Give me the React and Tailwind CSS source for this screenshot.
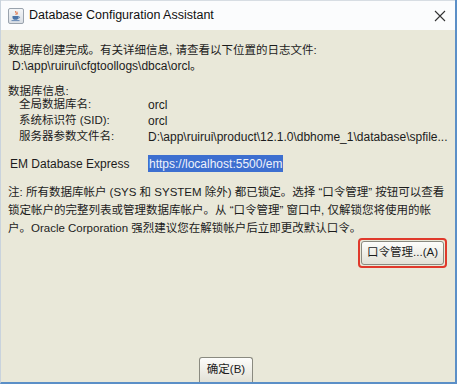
import React from "react";

const font = { fontFamily: '"Liberation Sans", "Noto Sans CJK SC", sans-serif' };

const JavaIcon = () => (
  <div className="w-[16px] h-[16px] rounded-[2px] border border-[#9aa3ad] bg-gradient-to-b from-[#f4f6f8] to-[#d9dee4] flex items-center justify-center">
    <svg width="12" height="12" viewBox="0 0 12 12">
      <path d="M6 1 C4.5 2.5 7.5 3 5.8 4.8" stroke="#e0602a" strokeWidth="1" fill="none" />
      <path d="M7.5 1.8 C6.6 2.8 8.2 3.3 7 4.6" stroke="#e0602a" strokeWidth="0.8" fill="none" />
      <path d="M2.5 6 H8.5 V7.5 C8.5 9 7.3 9.8 5.5 9.8 C3.7 9.8 2.5 9 2.5 7.5 Z" fill="#4a74a8" />
      <path d="M8.5 6.5 C10 6.5 10 8.3 8.3 8.3" stroke="#4a74a8" strokeWidth="0.8" fill="none" />
      <path d="M1.5 10.6 H9.5" stroke="#4a74a8" strokeWidth="0.8" />
    </svg>
  </div>
);

const InfoRow = ({ label, value }) => (
  <div className="flex h-4 items-center">
    <span className="w-[140px] pl-[11px] shrink-0">{label}</span>
    <span className="whitespace-nowrap text-[12px]">{value}</span>
  </div>
);

export default function App() {
  return (
    <div
      className="w-[457px] h-[384px] flex flex-col border-r-2 border-b-2 border-[#5b8fc7] border-l border-l-[#c9d3dd] overflow-hidden text-[11.5px] text-[#1c1c1c]"
      style={font}
    >
      {/* Title bar */}
      <div className="h-[30px] shrink-0 bg-[#fbfcfd] border-t border-[#d7dde3] flex items-center pl-[7px] pr-[9px]">
        <JavaIcon />
        <span className="ml-[5px] text-[12.5px] text-[#111]">Database Configuration Assistant</span>
        <svg className="ml-auto" width="12" height="12" viewBox="0 0 12 12">
          <path d="M1 1 L11 11 M11 1 L1 11" stroke="#333" strokeWidth="1.1" />
        </svg>
      </div>

      {/* Body */}
      <div className="flex-1 bg-[#e9e8d9] flex flex-col pl-[7px] pr-[10px]">
        <div className="mt-[13px] h-4 flex items-center whitespace-nowrap">
          数据库创建完成。有关详细信息, 请查看以下位置的日志文件:
        </div>
        <div className="-mt-[1px] h-4 flex items-center pl-[4px] whitespace-nowrap text-[12px]">
          D:\app\ruirui\cfgtoollogs\dbca\orcl。
        </div>

        <div className="mt-[10px] h-4 flex items-center">数据库信息:</div>
        <div className="flex flex-col -mt-[3px]">
          <InfoRow label="全局数据库名:" value="orcl" />
          <InfoRow label="系统标识符 (SID):" value="orcl" />
          <InfoRow label="服务器参数文件名:" value="D:\app\ruirui\product\12.1.0\dbhome_1\database\spfile..." />
        </div>

        <div className="mt-[10px] flex h-[17px] items-center">
          <span className="w-[140px] pl-[2px] shrink-0 text-[12px]">EM Database Express</span>
          <span className="bg-[#3d6fd0] text-[#eef2fb] h-[17px] px-[1px] flex items-center text-[12px]">
            https://localhost:5500/em
          </span>
        </div>

        <div className="mt-[11px] flex flex-col leading-[18px] whitespace-nowrap">
          <div>注: 所有数据库帐户 (SYS 和 SYSTEM 除外) 都已锁定。选择 “口令管理” 按钮可以查看</div>
          <div>锁定帐户的完整列表或管理数据库帐户。从 “口令管理” 窗口中, 仅解锁您将使用的帐</div>
          <div>户。Oracle Corporation 强烈建议您在解锁帐户后立即更改默认口令。</div>
        </div>

        <div className="mt-[1px] flex justify-end">
          <div className="rounded-[4px] border-2 border-[#e0392b] p-[1px] -mr-[2px]">
            <button className="h-[24px] px-[5px] rounded-[3px] border border-[#8a8a80] bg-gradient-to-b from-[#fdfdfb] to-[#e2e1d6] text-[11.5px] text-[#1c1c1c]">
              口令管理...(A)
            </button>
          </div>
        </div>

        <div className="mt-auto flex justify-center">
          <button className="h-[25px] px-[7px] rounded-t-[3px] border border-b-0 border-[#8a8a80] bg-gradient-to-b from-[#fdfdfb] to-[#e2e1d6] text-[11.5px] text-[#1c1c1c] -ml-[1px]">
            确定(B)
          </button>
        </div>
      </div>
    </div>
  );
}
